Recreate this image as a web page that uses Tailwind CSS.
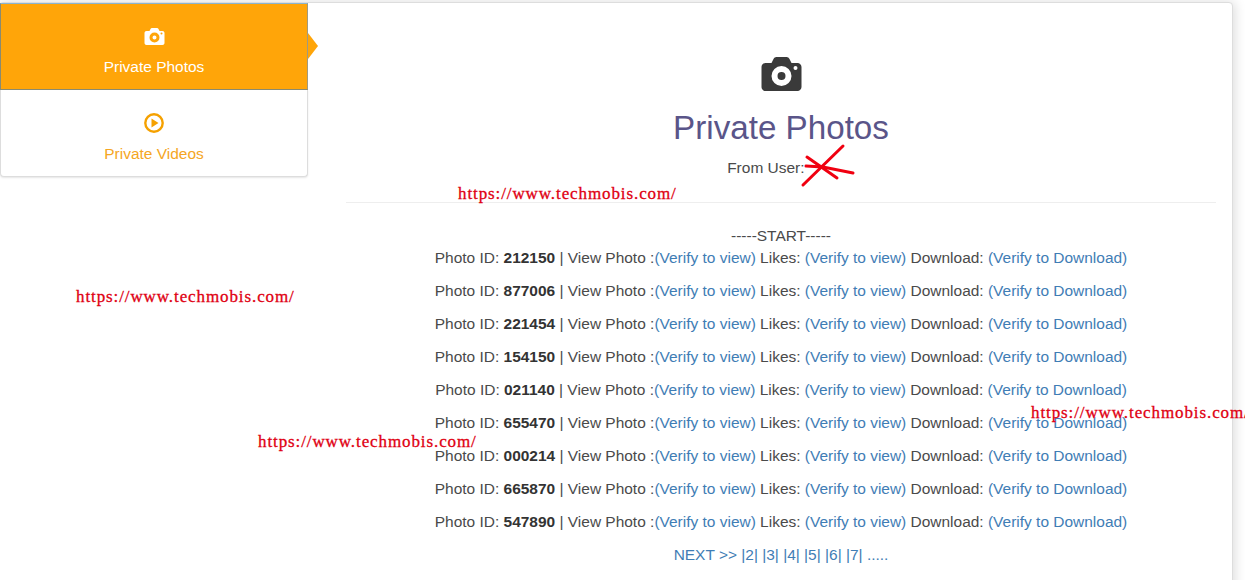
<!DOCTYPE html>
<html lang="en">
<head>
    <meta charset="UTF-8">
    <title>Private Photos</title>
    <script src="https://cdn.jsdelivr.net/npm/@tailwindcss/browser@4"></script>
</head>
<body class="bg-white overflow-hidden h-[580px] relative font-['Liberation_Sans',Arial,sans-serif] text-[#4a4a4a]">
    <div class="pt-[2px] -ml-px w-[1234px] h-[580px] overflow-visible">
        <div class="flex h-[640px] bg-white rounded border border-[#ddd] shadow-[2px_0_12px_rgba(0,0,0,0.14)]">
            <!-- tabs -->
            <div class="w-[308px] shrink-0">
                <div class="relative h-[87px] bg-[#ffa509] border border-t-[#8ab4d0] border-l-[#8a8a70] border-r-[#a09a80] border-b-[#8a8a70] flex flex-col items-center text-white">
                    <svg class="mt-[24px]" width="21" height="17" viewBox="0 0 40 34" fill="#fff">
                        <path fill-rule="evenodd" d="M4 6h6l2-4c.6-1.2 1.6-2 3-2h10c1.4 0 2.4.8 3 2l2 4h6c2.200 0 4 1.800 4 4v20c0 2.200-1.800 4-4 4H4c-2.200 0-4-1.800-4-4V10c0-2.200 1.800-4 4-4zM20 9a10 10 0 1 0 0 20 10 10 0 0 0 0-20zm0 6a4 4 0 1 1 0 8 4 4 0 0 1 0-8zM34 9a2 2 0 1 0 0 4 2 2 0 0 0 0-4z"/>
                    </svg>
                    <span class="mt-[11px] text-[15.47px] leading-[22px]">Private Photos</span>
                    <span class="absolute left-[307px] top-[29px] w-0 h-0 border-y-[13px] border-y-transparent border-l-[10px] border-l-[#ffa509]"></span>
                </div>
                <div class="h-[87px] bg-white border-x border-b border-[#ddd] rounded-b shadow-[0_1px_2px_rgba(0,0,0,0.1)] flex flex-col items-center text-[#f5a623]">
                    <svg class="mt-[23px]" width="20" height="20" viewBox="0 0 20 20">
                        <circle cx="10" cy="10" r="8.700" fill="none" stroke="#f5a100" stroke-width="2.400"/>
                        <path d="M7.500 5.500L14.500 10L7.500 14.500Z" fill="#f5a100"/>
                    </svg>
                    <span class="mt-[10px] text-[15.47px] leading-[22px]">Private Videos</span>
                </div>
            </div>

            <!-- content -->
            <div class="flex-1 pl-[38px] pr-[16px] text-center text-[15.47px] leading-[22px]">
                <svg class="mx-auto mt-[54px]" width="41" height="34" viewBox="0 0 40 34" fill="#3a3a3a">
                    <path fill-rule="evenodd" d="M4 6h6l2-4c.6-1.2 1.6-2 3-2h10c1.4 0 2.400.8 3 2l2 4h6c2.200 0 4 1.800 4 4v20c0 2.200-1.800 4-4 4H4c-2.200 0-4-1.800-4-4V10c0-2.200 1.800-4 4-4zM20 9a10 10 0 1 0 0 20 10 10 0 0 0 0-20zm0 6a4 4 0 1 1 0 8 4 4 0 0 1 0-8zM34 9a2 2 0 1 0 0 4 2 2 0 0 0 0-4z"/>
                </svg>
                <h1 class="mt-[19px] text-[33.2px] leading-[36px] text-[#5a5589]">Private Photos</h1>
                <p class="mt-[11px]">From User: <span class="inline-block w-[26px]"></span></p>
                <hr class="mt-[23px] border-[#eee]">
                <div class="mt-[22px]">-----START-----</div>
                <div>
                    <p>Photo ID: <b class="text-[#333]">212150</b> | View Photo :<a class="text-[#3f7db5]">(Verify to view)</a> Likes: <a class="text-[#3f7db5]">(Verify to view)</a> Download: <a class="text-[#3f7db5]">(Verify to Download)</a></p>
                    <p class="mt-[11px]">Photo ID: <b class="text-[#333]">877006</b> | View Photo :<a class="text-[#3f7db5]">(Verify to view)</a> Likes: <a class="text-[#3f7db5]">(Verify to view)</a> Download: <a class="text-[#3f7db5]">(Verify to Download)</a></p>
                    <p class="mt-[11px]">Photo ID: <b class="text-[#333]">221454</b> | View Photo :<a class="text-[#3f7db5]">(Verify to view)</a> Likes: <a class="text-[#3f7db5]">(Verify to view)</a> Download: <a class="text-[#3f7db5]">(Verify to Download)</a></p>
                    <p class="mt-[11px]">Photo ID: <b class="text-[#333]">154150</b> | View Photo :<a class="text-[#3f7db5]">(Verify to view)</a> Likes: <a class="text-[#3f7db5]">(Verify to view)</a> Download: <a class="text-[#3f7db5]">(Verify to Download)</a></p>
                    <p class="mt-[11px]">Photo ID: <b class="text-[#333]">021140</b> | View Photo :<a class="text-[#3f7db5]">(Verify to view)</a> Likes: <a class="text-[#3f7db5]">(Verify to view)</a> Download: <a class="text-[#3f7db5]">(Verify to Download)</a></p>
                    <p class="mt-[11px]">Photo ID: <b class="text-[#333]">655470</b> | View Photo :<a class="text-[#3f7db5]">(Verify to view)</a> Likes: <a class="text-[#3f7db5]">(Verify to view)</a> Download: <a class="text-[#3f7db5]">(Verify to Download)</a></p>
                    <p class="mt-[11px]">Photo ID: <b class="text-[#333]">000214</b> | View Photo :<a class="text-[#3f7db5]">(Verify to view)</a> Likes: <a class="text-[#3f7db5]">(Verify to view)</a> Download: <a class="text-[#3f7db5]">(Verify to Download)</a></p>
                    <p class="mt-[11px]">Photo ID: <b class="text-[#333]">665870</b> | View Photo :<a class="text-[#3f7db5]">(Verify to view)</a> Likes: <a class="text-[#3f7db5]">(Verify to view)</a> Download: <a class="text-[#3f7db5]">(Verify to Download)</a></p>
                    <p class="mt-[11px]">Photo ID: <b class="text-[#333]">547890</b> | View Photo :<a class="text-[#3f7db5]">(Verify to view)</a> Likes: <a class="text-[#3f7db5]">(Verify to view)</a> Download: <a class="text-[#3f7db5]">(Verify to Download)</a></p>
                </div>
                <p class="mt-[11px] text-[#3f7db5]">NEXT &gt;&gt; |2| |3| |4| |5| |6| |7| .....</p>
            </div>
        </div>
    </div>

    <!-- watermarks and scribble pasted on top of the page -->
    <span class="absolute left-[458px] top-[184px] font-['Liberation_Serif',serif] text-[17px] leading-[20px] tracking-[0.9px] [-webkit-text-stroke:0.3px_#e00012] text-[#e00012]">https://www.techmobis.com/</span>
    <span class="absolute left-[76px] top-[287px] font-['Liberation_Serif',serif] text-[17px] leading-[20px] tracking-[0.9px] [-webkit-text-stroke:0.3px_#e00012] text-[#e00012]">https://www.techmobis.com/</span>
    <span class="absolute left-[258px] top-[432px] font-['Liberation_Serif',serif] text-[17px] leading-[20px] tracking-[0.9px] [-webkit-text-stroke:0.3px_#e00012] text-[#e00012]">https://www.techmobis.com/</span>
    <span class="absolute left-[1031px] top-[403px] font-['Liberation_Serif',serif] text-[17px] leading-[20px] tracking-[0.9px] [-webkit-text-stroke:0.3px_#e00012] text-[#e00012] whitespace-nowrap">https://www.techmobis.com/</span>
    <svg class="absolute left-[800px] top-[142px]" width="58" height="48" viewBox="0 0 58 48" fill="none" stroke="#f00010" stroke-width="3" stroke-linecap="round">
        <path d="M3 43L43 4"/>
        <path d="M7 15L37 36"/>
        <path d="M6 24L23 25L53 31"/>
    </svg>
</body>
</html>
